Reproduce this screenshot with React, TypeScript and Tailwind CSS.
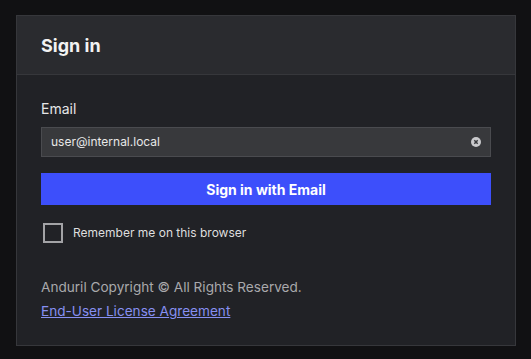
export default function App() {
  return (
    <div className="h-[359px] w-[531px] overflow-hidden bg-[#111113] pt-[15px] pl-[16px] font-['Inter',sans-serif]">
      <div className="w-[500px] h-[331px] border border-[#36373b] bg-[#212226]">
        <header className="flex h-[59px] items-center border-b border-[#36373b] bg-[#2a2b2f] px-6">
          <h1 className="text-[18px] font-bold text-[#f2f2f2]">Sign in</h1>
        </header>

        <div className="px-6 pt-[25px]">
          <label className="block text-[14px] leading-[18px] text-[#e6e6e6]">Email</label>
          <div className="mt-[9px] flex h-[30px] w-[450px] items-center justify-between border border-[#4a4b4f] bg-[#38393c] pl-[9px] pr-[9px]">
            <span className="text-[12px] text-[#e8e8e8]">user@internal.local</span>
            <svg width="10" height="10" viewBox="0 0 10 10">
              <circle cx="5" cy="5" r="5" fill="#c9c9cc" />
              <path d="M3.3 3.3 L6.7 6.7 M6.7 3.3 L3.3 6.7" stroke="#38393c" strokeWidth="1.5" />
            </svg>
          </div>

          {/* submit */}
          <button className="mt-[16px] flex h-[32px] w-[450px] items-center justify-center bg-[#3d4ffb] text-[14px] font-bold text-white">
            Sign in with Email
          </button>

          <div className="mt-[18px] flex items-center gap-[10px] pl-[2px]">
            <div className="h-[20px] w-[20px] border-2 border-[#a3a3a6]" />
            <span className="text-[12px] text-[#dedede]">Remember me on this browser</span>
          </div>

          <p className="mt-[34px] text-[13.6px] leading-[20px] text-[#a9a9ac]">Anduril Copyright © All Rights Reserved.</p>
          <a href="#" className="mt-[4px] block text-[13.6px] leading-[20px] text-[#8790f2] underline">
            End-User License Agreement
          </a>
        </div>
      </div>
    </div>
  );
}
